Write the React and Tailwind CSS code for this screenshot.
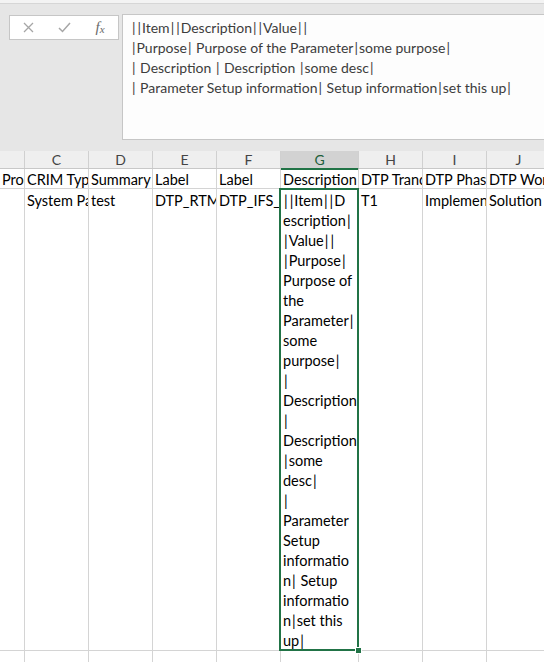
import React from 'react';

const COLS = [
  { key: 'B', w: 'w-[25px]', label: '' },
  { key: 'C', w: 'w-[64px]', label: 'C' },
  { key: 'D', w: 'w-[64px]', label: 'D' },
  { key: 'E', w: 'w-[64px]', label: 'E' },
  { key: 'F', w: 'w-[64px]', label: 'F' },
  { key: 'G', w: 'w-[78px]', label: 'G' },
  { key: 'H', w: 'w-[64px]', label: 'H' },
  { key: 'I', w: 'w-[64px]', label: 'I' },
  { key: 'J', w: 'w-[64px]', label: 'J' },
];

const ROW1 = ['Process', 'CRIM Type', 'Summary', 'Label', 'Label', 'Description', 'DTP Tranche', 'DTP Phase', 'DTP Workstream'];
const ROW2 = ['', 'System Parameter', 'test', 'DTP_RTM', 'DTP_IFS_CFG', null, 'T1', 'Implementation', 'Solution'];

const FORMULA = [
  '||Item||Description||Value||',
  '|Purpose| Purpose of the Parameter|some purpose|',
  '| Description | Description |some desc|',
  '| Parameter Setup information| Setup information|set this up|',
];

const WRAPPED = [
  '||Item||D', 'escription|', '|Value||', '|Purpose|', 'Purpose of', 'the', 'Parameter|',
  'some', 'purpose|', '|', 'Description', '|', 'Description', '|some', 'desc|', '|',
  'Parameter', 'Setup', 'informatio', 'n| Setup', 'informatio', 'n|set this', 'up|',
];

// Calibri's bar is wider than Lato's, so pad each one a little
const Piped = ({ text }) => (
  <>
    {text.split('|').map((part, i) => (
      <React.Fragment key={i}>
        {i > 0 && <span className="px-[1px]">|</span>}
        {part}
      </React.Fragment>
    ))}
  </>
);

const Cell = ({ col, children, className = '' }) => (
  <div className={`${col.w} shrink-0 border-r border-[#d4d4d4] overflow-hidden whitespace-nowrap ${className}`}>
    {children}
  </div>
);

export default function App() {
  return (
    <div className="w-[544px] h-[662px] overflow-hidden bg-white text-black" style={{ fontFamily: 'Lato, "Open Sans", sans-serif' }}>
      {/* ribbon edge */}
      <div className="h-[4px] bg-[#f3f3f3] border-b border-[#d6d6d6]" />

      {/* formula bar */}
      <div className="flex items-start bg-[#e6e6e6] pt-[10px] pb-[11px]">
        <div className="ml-[9px] mt-[1px] w-[110px] h-[25px] flex items-center bg-white border border-[#c6c6c6]">
          <span className="w-[36px] flex justify-center text-[#a6a6a6]">
            <svg width="11" height="11" viewBox="0 0 11 11"><path d="M1 1 L10 10 M10 1 L1 10" stroke="currentColor" strokeWidth="1.3" /></svg>
          </span>
          <span className="w-[36px] flex justify-center text-[#a6a6a6]">
            <svg width="13" height="11" viewBox="0 0 13 11"><path d="M1 6 L4.5 9.5 L12 1" stroke="currentColor" strokeWidth="1.5" fill="none" /></svg>
          </span>
          <span className="w-[36px] flex justify-center items-baseline italic text-[#6a6a6a] leading-none" style={{ fontFamily: '"Liberation Serif", serif' }}>
            <span className="text-[15px]">f</span>
            <span className="text-[11px] relative top-[1px]">x</span>
          </span>
        </div>
        <div className="ml-[3px] flex-1 h-[126px] bg-[#fdfdfd] border border-[#c6c6c6] border-r-0 pl-[8px] pt-[3px] text-[14px] leading-[20px] text-[#3c3c3c]">
          {FORMULA.map((l, i) => (
            <div key={i} className="whitespace-pre"><Piped text={l} /></div>
          ))}
        </div>
      </div>

      {/* column headers */}
      <div className="flex h-[18px] bg-[#efefef] border-b border-[#c8c8c8] text-[14px] leading-[17px] text-[#444]">
        {COLS.map((c) => (
          <div
            key={c.key}
            className={`${c.w} shrink-0 text-center border-r border-[#d0d0d0] ${c.key === 'G' ? 'bg-[#d2d2d2] border-b-2 border-b-[#217346] text-[#1e5e3a] h-[19px]' : ''}`}
          >
            {c.label}
          </div>
        ))}
      </div>

      {/* row 1 */}
      <div className="flex h-[20px] border-b border-[#d4d4d4] text-[14.5px] leading-[20px]">
        {COLS.map((c, i) => (
          <Cell key={c.key} col={c} className="pl-[2px] pt-[1px]">
            {ROW1[i]}
          </Cell>
        ))}
      </div>

      {/* row 2 */}
      <div className="flex h-[462px] border-b border-[#d4d4d4] text-[14.5px] leading-[20px]">
        {COLS.map((c, i) =>
          c.key === 'G' ? (
            <div key={c.key} className={`${c.w} shrink-0 relative border-r border-[#d4d4d4]`}>
              <div className="absolute -left-[2px] -top-[1px] -right-[1px] -bottom-[1px] border-2 border-[#217346]" />
              <div className="pl-[2px] pt-[2px]">
                {WRAPPED.map((l, j) => (
                  <div key={j} className="whitespace-pre"><Piped text={l} /></div>
                ))}
              </div>
              <div className="absolute -right-[4px] -bottom-[4px] w-[7px] h-[7px] bg-[#217346] border border-white" />
            </div>
          ) : (
            <Cell key={c.key} col={c} className="pl-[2px] pt-[2px]">
              {ROW2[i]}
            </Cell>
          )
        )}
      </div>

      {/* row 3 */}
      <div className="flex h-[20px]">
        {COLS.map((c) => (
          <Cell key={c.key} col={c} />
        ))}
      </div>
    </div>
  );
}
